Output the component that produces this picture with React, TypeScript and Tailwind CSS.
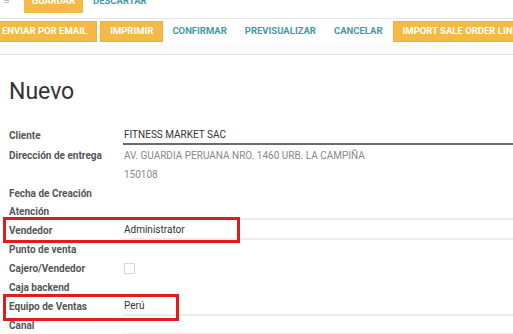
import React from 'react';

const yellowBtn =
  'h-[21px] px-[9px] flex items-center bg-[#f5b945] text-white text-[9.5px] font-bold border border-[#eeb03a] shrink-0';
const linkBtn = 'h-[21px] flex items-center text-[#3f9aa6] text-[9.5px] font-bold shrink-0';

type Row = {
  label?: string;
  value?: React.ReactNode;
  h: number;
  line?: 'dark' | 'light';
  muted?: boolean;
};

const rows: Row[] = [
  { label: 'Cliente', value: 'FITNESS MARKET SAC', h: 20, line: 'dark' },
  { label: 'Dirección de entrega', value: 'AV. GUARDIA PERUANA NRO. 1460 URB. LA CAMPIÑA', h: 20, muted: true },
  { value: '150108', h: 19, muted: true },
  { label: 'Fecha de Creación', h: 18 },
  { label: 'Atención', h: 18, line: 'light' },
  { label: 'Vendedor', value: 'Administrator', h: 20, line: 'light' },
  { label: 'Punto de venta', h: 19 },
  {
    label: 'Cajero/Vendedor',
    value: <span className="block w-[11px] h-[11px] border border-[#d6d6d6] bg-white" />,
    h: 19,
  },
  { label: 'Caja backend', h: 19 },
  { label: 'Equipo de Ventas', value: 'Perú', h: 19, line: 'light' },
  { label: 'Canal', h: 19, line: 'light' },
];

export default function App() {
  return (
    <div
      className="relative w-[513px] h-[334px] overflow-hidden bg-white"
      style={{ fontFamily: 'Roboto, "Noto Sans", sans-serif' }}
    >
      {/* top bar (cut off) */}
      <div className="h-[13px] flex items-end overflow-hidden">
        <span className="w-[24px] pl-[4px] text-[#aaa] text-[10px] leading-none pb-[7px]">≡</span>
        <div className="h-[24px] w-[59px] flex items-center justify-center bg-[#f5b945] text-white text-[9.5px] font-bold">
          GUARDAR
        </div>
        <div className="h-[24px] ml-[10px] flex items-center text-[#3f9aa6] text-[9.5px] font-bold">
          DESCARTAR
        </div>
      </div>
      <div className="h-[6px] border-b border-[#e6e6e6]" />

      {/* action bar */}
      <div className="h-[26px] pt-[2px] flex items-start -ml-[8px]">
        <div className={yellowBtn}>ENVIAR POR EMAIL</div>
        <div className={yellowBtn + ' ml-[3px]'}>IMPRIMIR</div>
        <div className={linkBtn + ' ml-[9px]'}>CONFIRMAR</div>
        <div className={linkBtn + ' ml-[18px]'}>PREVISUALIZAR</div>
        <div className={linkBtn + ' ml-[18px]'}>CANCELAR</div>
        <div className={yellowBtn + ' ml-[10px]'}>IMPORT SALE ORDER LINES</div>
      </div>
      <div className="h-[10px] bg-[#fafafa] border-b border-[#e3e3e3]" />

      {/* form */}
      <div className="px-[9px]">
        <h1 className="mt-[22px] text-[23px] leading-[30px] text-[#333]">Nuevo</h1>
        <div className="mt-[18px] flex flex-col">
          {rows.map((r, i) => (
            <div key={i} className="flex items-stretch" style={{ height: r.h }}>
              <div className="w-[114px] flex items-center text-[10px] font-bold text-[#555] shrink-0">
                {r.label}
              </div>
              <div
                className={
                  'flex-1 -mr-[9px] flex items-center text-[10px] ' +
                  (r.muted ? 'text-[#888] ' : 'text-[#333] ') +
                  (r.line === 'dark'
                    ? 'border-b-2 border-[#6b6b6b]'
                    : r.line === 'light'
                      ? 'border-b-2 border-[#ececec]'
                      : '')
                }
              >
                <span className="pl-[1px]">{r.value}</span>
              </div>
            </div>
          ))}
        </div>
      </div>

      {/* annotation boxes */}
      <div className="absolute left-[3px] top-[217px] w-[237px] h-[26px] border-[3px] border-[#e31b1b]" />
      <div className="absolute left-[3px] top-[294px] w-[176px] h-[27px] border-[3px] border-[#e31b1b]" />
    </div>
  );
}
